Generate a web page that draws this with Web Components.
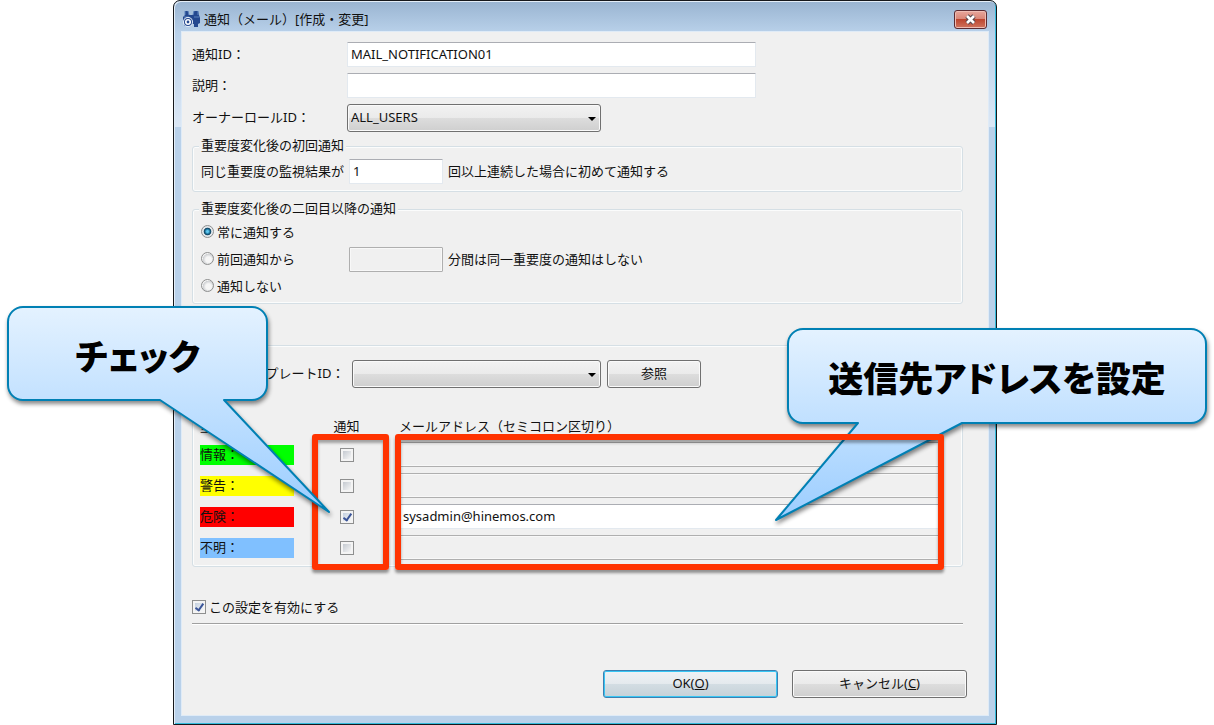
<!DOCTYPE html>
<html lang="ja">
<head>
<meta charset="utf-8">
<title>通知（メール）[作成・変更]</title>
<style>
body { margin: 0; background: #fff; color: #111; font: 13px/20px "Noto Sans", "Noto Sans CJK JP", sans-serif; }
</style>
</head>
<body>
<mail-notify-page></mail-notify-page>
<script>
const CONTROLS = `
  *, *::before { box-sizing: border-box; }
  input, select, button { font: inherit; color: inherit; margin: 0; outline: none; }
  input[type=text] { width: 100%; min-width: 0; height: 25px; padding: 0 3px 2px; border: 1px solid #e3e9ef; border-top-color: #abadb3; border-radius: 1px; background: #fff; }
  input[type=text]:disabled { background: #f0f0f0; border: 1px solid #afafaf; box-shadow: inset 0 0 0 1px #f8f8f8; }
  input[type=checkbox] { appearance: none; width: 14px; height: 14px; flex: none; border: 1px solid #8e8f8f; background: linear-gradient(135deg, #c4c9d0, #f6f6f6) content-box, #f4f4f4; padding: 2px; position: relative; display: block; }
  input[type=checkbox]:checked { background: linear-gradient(135deg, #c4d0e0, #f6f6f6) content-box, #f4f4f4; }
  input[type=checkbox]:checked::before { content: ""; position: absolute; left: 4px; top: 1px; width: 5px; height: 9px; border: solid #3b5598; border-width: 0 2px 2px 0; transform: rotate(35deg); }
  input[type=radio] { appearance: none; width: 13px; height: 13px; flex: none; border: 1px solid #8e8f8f; border-radius: 50%; background: radial-gradient(circle at 60% 60%, #f6f6f6 0 30%, #cdcfd2 60%, #f4f4f4 66%); }
  input[type=radio]:checked { background: radial-gradient(circle, #5fc8f0 0 12%, #14648c 34%, #10405c 44%, #e4e8ec 54%); }
  button, select { height: 28px; border: 1px solid #707070; border-radius: 3px; padding: 0 3px 2px; background: linear-gradient(#f2f2f2, #ebebeb 48%, #dddddd 50%, #cfcfcf); box-shadow: inset 0 0 0 1px #fafafa; }
  select { appearance: none; width: 100%; }
  .combo { position: relative; display: block; }
  .combo::after { content: ""; position: absolute; right: 5px; top: 13px; border: solid transparent; border-width: 4px 4px 0; border-top-color: #000; pointer-events: none; }
  label { white-space: nowrap; padding-bottom: 2px; }
`;
function define(name, css, html) {
  const tpl = document.createElement("template");
  customElements.define(name, class extends HTMLElement {
    connectedCallback() {
      if (this.shadowRoot) return;
      tpl.innerHTML = `<style>${CONTROLS}${css}</style>` + (typeof html === "function" ? html(this) : html);
      this.attachShadow({ mode: "open" }).append(tpl.content.cloneNode(true));
    }
  });
}

define("glass-window", `
  :host { display: block; min-height: 100vh; box-sizing: border-box; border: 1px solid #16181c; border-radius: 7px 7px 0 0; padding: 0 7px 8px;
    background: linear-gradient(#99b4d1, #b9d1ea) 0 0 / 100% 32px no-repeat, linear-gradient(#b9d1ea, #dbe7f5) 0 31px / 100% 95px no-repeat, #b9d1ea;
    box-shadow: inset 1px 1px #e4eef8, inset -1px -1px #35bcdc; }
  header { height: 30px; display: flex; align-items: center; gap: 3px; padding: 6px 0 0 1px; }
  h1 { font: inherit; margin: 0; flex: 1; }
  .close { width: 33px; height: 19px; margin-right: 2px; padding: 0; display: grid; place-items: center; border: 1px solid #5b2b32; border-radius: 3px;
    background: linear-gradient(#e8a79c, #d98678 46%, #bd4630 50%, #d0745e); box-shadow: inset 0 0 0 1px #eebdb4; }
  main { border: 1px solid #dfebf7; background: #f0f0f0; padding: 10px 21px 17px 10px; }
  svg { display: block; }
`, host => `
  <header>
    <svg width="19" height="18" viewBox="0 0 19 18" aria-hidden="true">
      <path d="M3 1h3l1 4h4l1-4h4l1 4 1 3v5l-2 1v3h-4v-3H9v2H2v-3L1 11V7l2-2z" fill="#24488f"/>
      <path d="M3 1v4M6 1l1 4M12 1l-1 4M16 1v4M2 7h5M12 7h5" stroke="#5b82bd" fill="none"/>
      <circle cx="6" cy="12" r="5" fill="#e8f0fa"/><circle cx="6" cy="12" r="4" fill="#24488f"/>
      <circle cx="6" cy="12" r="3" fill="#fff"/><circle cx="6" cy="12" r="1.4" fill="#24488f"/>
    </svg>
    <h1>${host.getAttribute("heading")}</h1>
    <button class="close" type="button" aria-label="閉じる">
      <svg width="13" height="11" viewBox="0 0 13 11"><path d="M3 2l7 7M10 2l-7 7" stroke="#57474d" stroke-width="4.6"/><path d="M3 2l7 7M10 2l-7 7" stroke="#fff" stroke-width="2.6"/></svg>
    </button>
  </header>
  <main><slot></slot></main>`);

define("group-box", `
  :host { display: block; }
  fieldset { margin: 0; min-width: 0; padding: 0 8px; border: 1px solid #d5dfe5; border-radius: 3px; box-shadow: inset 0 0 0 1px #fbfcfc; }
  legend { padding: 0 2px 2px; margin-left: -2px; line-height: 16px; background: #f0f0f0; }
`, host => {
  const t = host.getAttribute("heading");
  return `<fieldset>${t ? `<legend>${t}</legend>` : ""}<slot></slot></fieldset>`;
});

define("identity-fields", `
  :host { display: grid; grid-template-columns: 155px minmax(0, 409px); row-gap: 6px; align-items: center; }
  .combo { max-width: 254px; }
`, `
  <label for="id">通知ID：</label><input id="id" type="text" value="MAIL_NOTIFICATION01">
  <label for="desc">説明：</label><input id="desc" type="text">
  <label for="role">オーナーロールID：</label><span class="combo"><select id="role"><option>ALL_USERS</option></select></span>`);

define("first-notice", `
  :host { display: grid; grid-template-columns: 148px 94px 1fr; align-items: center; padding: 4px 0 7px; }
  span { padding: 0 0 2px 5px; }
`, `<label for="n">同じ重要度の監視結果が</label><input id="n" type="text" value="1"><span>回以上連続した場合に初めて通知する</span>`);

define("repeat-notice", `
  :host { display: block; padding: 1px 0 3px; }
  .row { display: grid; grid-template-columns: 148px 94px 1fr; align-items: center; height: 27px; }
  label { display: flex; align-items: center; gap: 3px; }
  span { padding: 0 0 2px 5px; }
`, `
  <div class="row"><label><input type="radio" name="r" checked>常に通知する</label></div>
  <div class="row"><label><input type="radio" name="r">前回通知から</label><input type="text" disabled aria-label="分間"><span>分間は同一重要度の通知はしない</span></div>
  <div class="row"><label><input type="radio" name="r">通知しない</label></div>`);

define("template-picker", `
  :host { display: grid; grid-template-columns: 151px minmax(0, 249px) 94px; align-items: center; padding-top: 14px; }
  button { margin-left: 6px; width: 94px; }
`, `<label for="t">メールテンプレートID：</label><span class="combo"><select id="t"><option></option></select></span><button type="button">参照</button>`);

define("severity-table", `
  :host { display: block; padding-top: 22px; margin-left: -1px; }
  table { width: 100%; border-spacing: 0 6px; table-layout: fixed; }
  th, td { padding: 0; height: 25px; font-weight: normal; text-align: left; vertical-align: middle; }
  thead th { height: 20px; }
  .sev { width: 94px; } .chk { width: 105px; text-align: center; }
  td.chk input { margin: 0 auto; }
  td:last-child { padding-right: 14px; }
  tbody th span { display: block; line-height: 18px; padding-bottom: 2px; }
`, () => `<table><thead><tr><th class="sev">重要度</th><th class="chk">通知</th><th>メールアドレス（セミコロン区切り）</th></tr></thead><tbody>` +
  [["情報", "#0f0"], ["警告", "#ff0"], ["危険", "#f00", "sysadmin@hinemos.com"], ["不明", "#80c0ff"]].map(([n, c, m]) =>
    `<tr><th scope="row"><span style="background:${c}">${n}：</span></th>
     <td class="chk"><input type="checkbox" aria-label="${n} 通知" ${m ? "checked" : ""}></td>
     <td><input type="text" aria-label="${n} メールアドレス" ${m ? `value="${m}"` : "disabled"}></td></tr>`).join("") + `</tbody></table>`);

define("enable-setting", `
  :host { display: block; border-bottom: 1px solid #fff; }
  div { border-bottom: 1px solid #a0a0a0; padding-bottom: 4px; }
  label { display: flex; align-items: center; gap: 3px; }
`, `<div><label><input type="checkbox" checked>この設定を有効にする</label></div>`);

define("dialog-actions", `
  :host { display: flex; justify-content: flex-end; gap: 14px; }
  button { width: 175px; }
  .ok { border: 1px solid #3c7fb1; background: linear-gradient(#eef2f5, #e5eaee 48%, #d3dde3 50%, #c5d1d8); box-shadow: inset 0 0 0 1px #38c6f4; }
`, `<button class="ok" type="button">OK(<u>O</u>)</button><button type="button">キャンセル(<u>C</u>)</button>`);

define("mark-frame", `
  :host { display: block; box-sizing: border-box; border: 6px solid #ff3300; border-radius: 3px; box-shadow: 0 3px 3px #0006, inset 0 3px 3px #0005; pointer-events: none; }
`, ``);

/* Balloon with a pointed tail; the box size and the tail are given as attributes. */
define("speech-note", `
  :host { display: block; pointer-events: none; color: #000; }
  .box { position: relative; display: grid; place-items: center; font: 900 35px/42px "Noto Sans CJK JP", sans-serif; font-feature-settings: "palt"; }
  svg { position: absolute; left: 0; top: 0; overflow: visible; filter: drop-shadow(1px 3px 2px #0007); }
  span { position: relative; padding-top: 2px; }
`, host => {
  const [w, h] = host.getAttribute("box").split(" ").map(Number);
  const [a, b, x, y] = host.getAttribute("tail").split(" ").map(Number);
  const r = 15;
  return `<div class="box" style="width:${w}px;height:${h}px">
    <svg width="${w}" height="${y}" aria-hidden="true"><defs><linearGradient id="fill" x1="0" y1="0" x2="0" y2="1"><stop offset="0" stop-color="#e4f2ff"/><stop offset="1" stop-color="#9bcdff"/></linearGradient></defs>
    <path d="M${r} 0H${w - r}A${r} ${r} 0 0 1 ${w} ${r}V${h - r}A${r} ${r} 0 0 1 ${w - r} ${h}H${b}L${x} ${y}L${a} ${h}H${r}A${r} ${r} 0 0 1 0 ${h - r}V${r}A${r} ${r} 0 0 1 ${r} 0Z" fill="url(#fill)" stroke="#0080b4" stroke-width="2" stroke-linejoin="round"/></svg>
    <span><slot></slot></span></div>`;
});

define("mail-notify-page", `
  :host { display: block; position: relative; padding: 0 217px 0 173px; }
  .form { margin-right: 4px; }
  .first { margin-top: 5px; } .repeat { margin-top: 8px; } .mail { margin-top: 41px; }
  enable-setting { margin-top: 30px; }
  dialog-actions { margin-top: 45px; }
  mark-frame, speech-note { position: absolute; }
  .mark-check { left: 312px; top: 434px; width: 77px; height: 136px; }
  .mark-mail { left: 395px; right: 270px; top: 434px; height: 136px; }
  .note-check { left: 8px; top: 307px; }
  .note-mail { right: 8px; top: 329px; }
`, `
  <glass-window heading="通知（メール）[作成・変更]">
    <div class="form">
      <identity-fields></identity-fields>
      <group-box class="first" heading="重要度変化後の初回通知"><first-notice></first-notice></group-box>
      <group-box class="repeat" heading="重要度変化後の二回目以降の通知"><repeat-notice></repeat-notice></group-box>
      <group-box class="mail"><template-picker></template-picker><severity-table></severity-table></group-box>
      <enable-setting></enable-setting>
    </div>
    <dialog-actions></dialog-actions>
  </glass-window>
  <speech-note class="note-mail" box="418 94" tail="70 174 -12 191">送信先アドレスを設定</speech-note>
  <mark-frame class="mark-check"></mark-frame>
  <mark-frame class="mark-mail"></mark-frame>
  <speech-note class="note-check" box="259 93" tail="152 216 321 205">チェック</speech-note>`);
</script>
</body>
</html>
